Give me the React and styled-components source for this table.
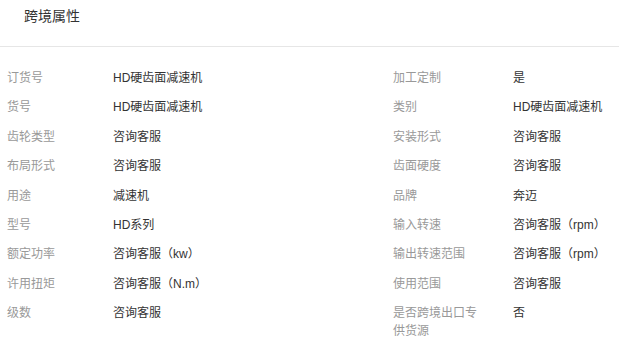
import React from "react";
import styled, { createGlobalStyle } from "styled-components";

const Global = createGlobalStyle`
  html, body { margin: 0; padding: 0; background: #fff; }
  body { font-family: "Liberation Sans", "Noto Sans CJK SC", sans-serif; }
`;

const Panel = styled.section`
  width: 619px;
  background: #fff;
`;

const Header = styled.div`
  height: 47px;
  box-sizing: border-box;
  padding: 6px 0 0 24px;
  border-bottom: 1px solid #e6e6e6;
  font-size: 14px;
  line-height: 20px;
  color: #333;
`;

const Grid = styled.dl`
  margin: 0;
  padding: 22px 0 0 7px;
  display: grid;
  grid-template-columns: 106px 280px 120px 1fr;
  row-gap: 11.4px;
  font-size: 12px;
  line-height: 18px;
`;

const Label = styled.dt`
  color: #999;
  max-width: ${(p) => (p.$right ? "90px" : "100px")};
`;

const Value = styled.dd`
  margin: 0;
  color: #333;
`;

const rows = [
  ["订货号", "HD硬齿面减速机", "加工定制", "是"],
  ["货号", "HD硬齿面减速机", "类别", "HD硬齿面减速机"],
  ["齿轮类型", "咨询客服", "安装形式", "咨询客服"],
  ["布局形式", "咨询客服", "齿面硬度", "咨询客服"],
  ["用途", "减速机", "品牌", "奔迈"],
  ["型号", "HD系列", "输入转速", "咨询客服（rpm）"],
  ["额定功率", "咨询客服（kw）", "输出转速范围", "咨询客服（rpm）"],
  ["许用扭矩", "咨询客服（N.m）", "使用范围", "咨询客服"],
  ["级数", "咨询客服", "是否跨境出口专供货源", "否"],
];

export default function App() {
  return (
    <Panel>
      <Global />
      <Header>跨境属性</Header>
      <Grid>
        {rows.map(([l1, v1, l2, v2]) => (
          <React.Fragment key={l1}>
            <Label>{l1}</Label>
            <Value>{v1}</Value>
            <Label $right>{l2}</Label>
            <Value>{v2}</Value>
          </React.Fragment>
        ))}
      </Grid>
    </Panel>
  );
}
